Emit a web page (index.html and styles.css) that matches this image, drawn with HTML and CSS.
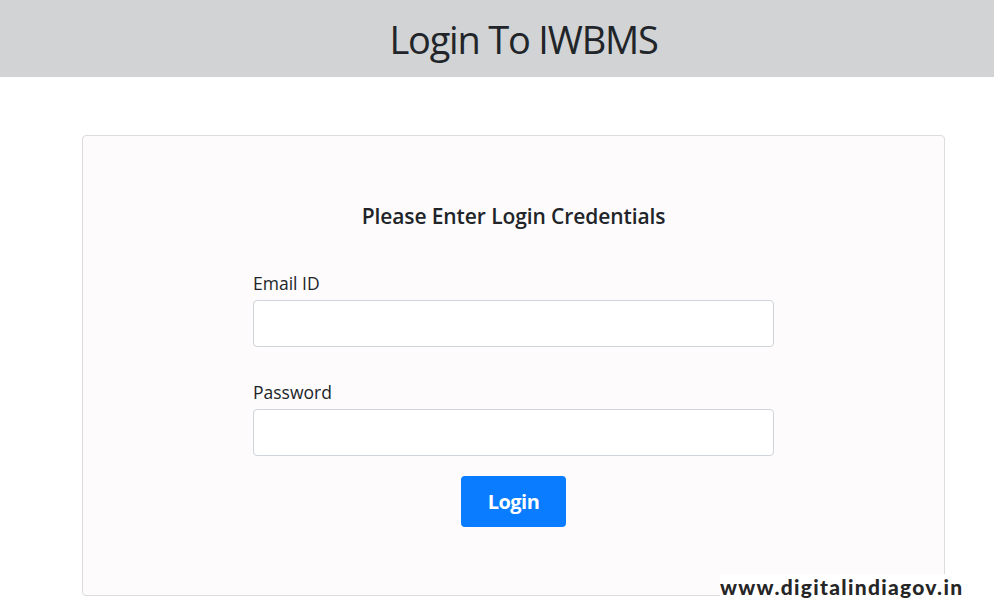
FILE: index.html
```html
<!DOCTYPE html>
<html>
<head>
    <title>Login To IWBMS</title>
    <link rel="stylesheet" href="styles.css">
</head>
<body>
    <div class="header">
        <h1>Login To IWBMS</h1>
    </div>
    <div class="container">
        <div class="card">
            <h2>Please Enter Login Credentials</h2>
            <form class="login-form" onsubmit="event.preventDefault()">
                <div class="form-group">
                    <label for="email">Email ID</label>
                    <input type="text" id="email" name="email">
                </div>
                <div class="form-group">
                    <label for="password">Password</label>
                    <input type="password" id="password" name="password">
                </div>
                <div class="form-actions">
                    <button type="submit">Login</button>
                </div>
            </form>
        </div>
    </div>
    <div class="watermark">www.digitalindiagov.in</div>
</body>
</html>
```

FILE: styles.css
```css
body {
    font-family: "Open Sans", "Noto Sans", sans-serif;
    background-color: #fff;
    color: #212529;
    margin: 0;
    padding: 0;
}
.header {
    background-color: #d1d3d4;
    height: 77px;
    display: flex;
    align-items: center;
    justify-content: center;
    padding-left: 53px;
}
.header h1 {
    margin: 0;
    font-size: 38px;
    font-weight: 400;
    color: #212529;
    letter-spacing: -1.2px;
}
.container {
    padding: 58px 49px 0 82px;
}
.card {
    width: 863px;
    height: 461px;
    background-color: #fdfbfc;
    border: 1px solid #dcdcdc;
    border-radius: 4px;
    padding-top: 66px;
    box-sizing: border-box;
}
.card h2 {
    margin: 0;
    text-align: center;
    font-size: 21px;
    font-weight: 600;
    color: #212529;
    letter-spacing: -0.1px;
}
.login-form {
    width: 521px;
    margin: 41px auto 0;
}
.form-group {
    margin-bottom: 20px;
}
.form-group + .form-group {
    padding-top: 13px;
}
.form-group label {
    display: block;
    font-size: 17.5px;
    margin-bottom: 5px;
    color: #212529;
}
.form-group input {
    width: 100%;
    height: 47px;
    box-sizing: border-box;
    border: 1px solid #ced4da;
    border-radius: 4px;
    background-color: #fff;
    padding: 6px 12px;
}
.form-actions {
    display: flex;
    justify-content: center;
}
.form-actions button {
    width: 105px;
    height: 51px;
    background-color: #0a7cff;
    color: #fff;
    border: none;
    border-radius: 4px;
    font-family: "Open Sans", sans-serif;
    font-size: 20px;
    font-weight: 700;
    letter-spacing: -0.5px;
    cursor: pointer;
}
.watermark {
    position: absolute;
    left: 720px;
    top: 574px;
    font-family: "Lato", sans-serif;
    font-weight: 900;
    font-size: 21px;
    color: #262626;
    background-color: #fff;
    letter-spacing: 1.3px;
}
```
